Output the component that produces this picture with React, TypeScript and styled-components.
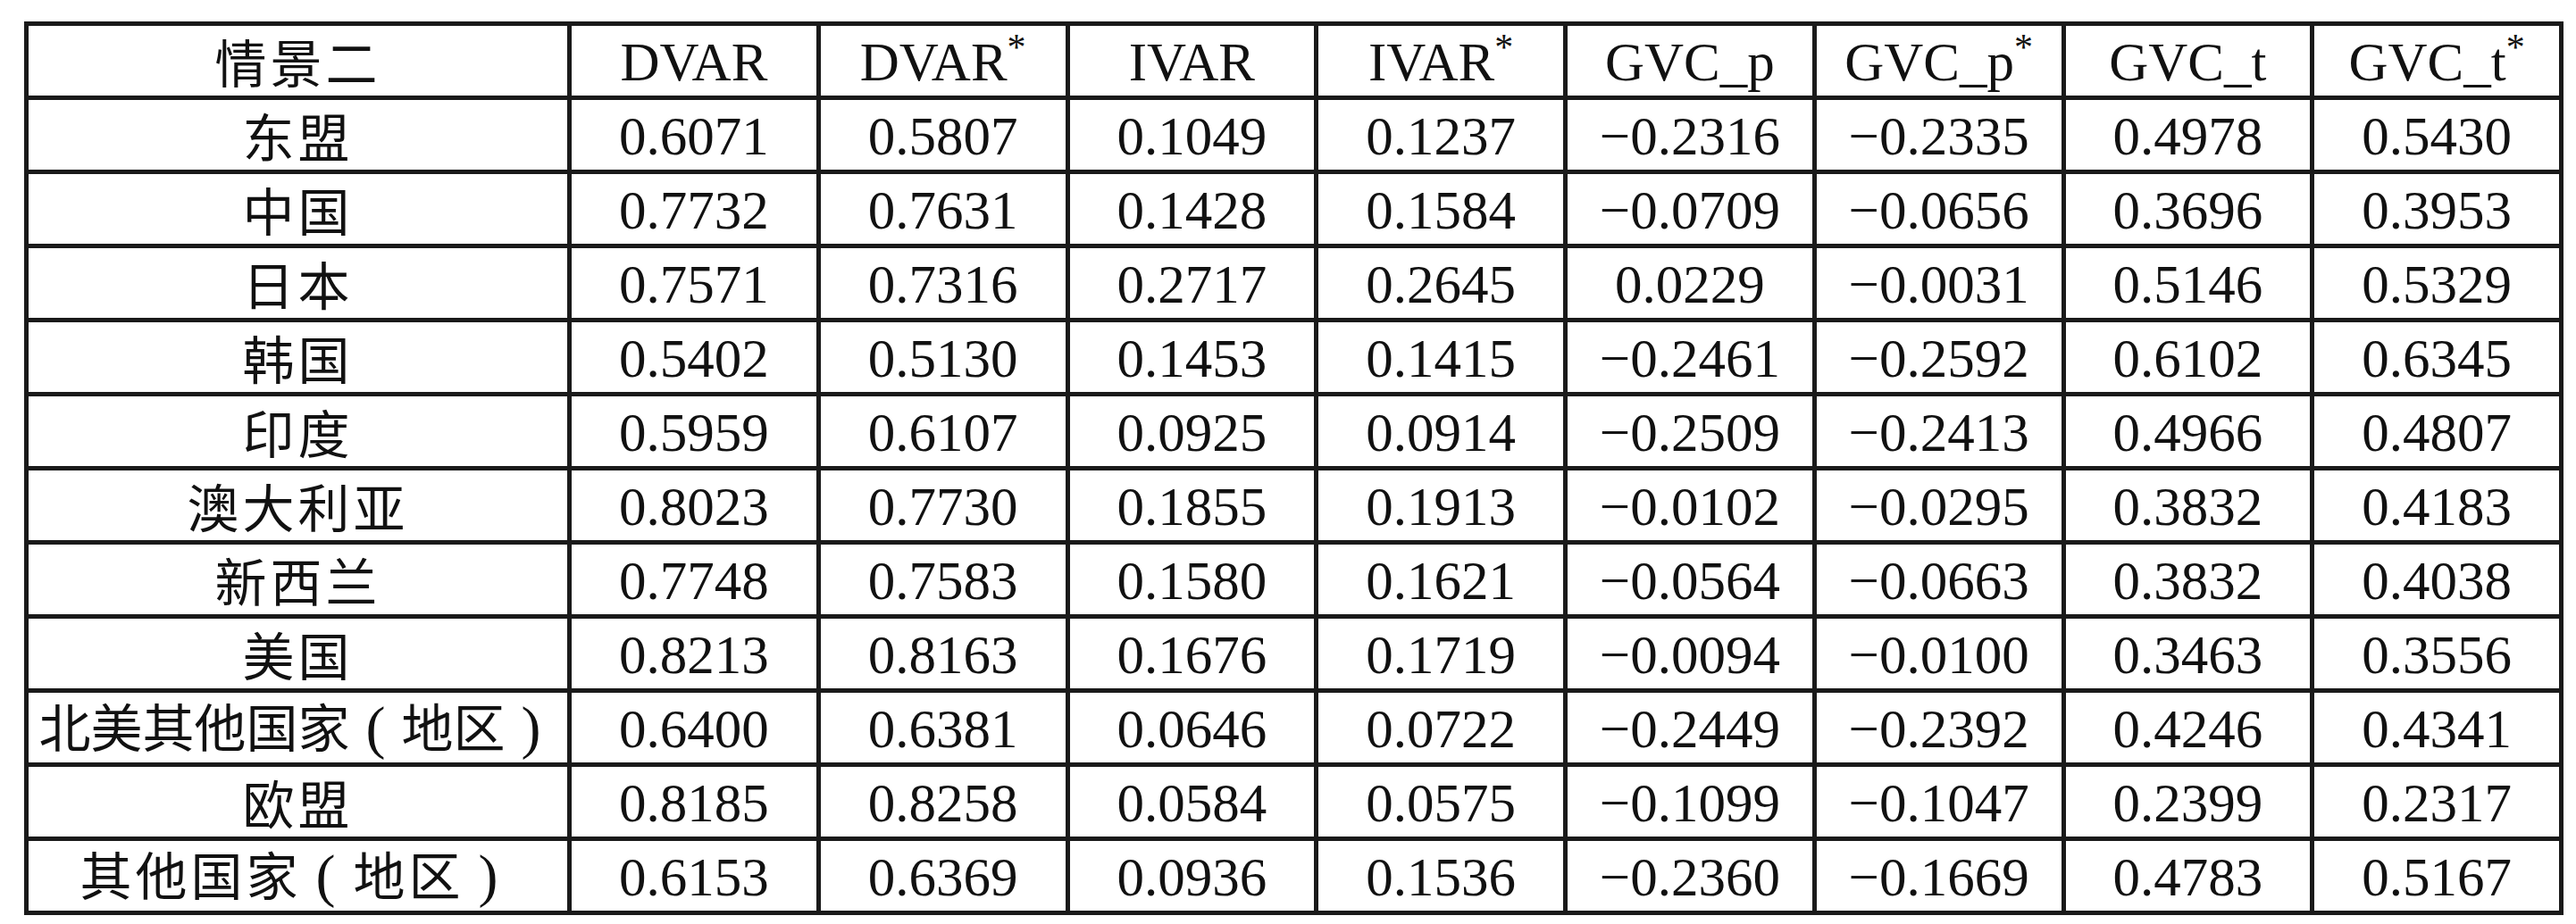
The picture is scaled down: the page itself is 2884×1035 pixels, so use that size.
import styled, { createGlobalStyle } from 'styled-components';

const GlobalStyle = createGlobalStyle`
  html, body {
    margin: 0;
    background: #fff;
  }
  body {
    font-family: "Liberation Serif", "Noto Sans CJK SC", serif;
    color: #111;
  }
`;

type Column = { label: string; star?: boolean };

const COLUMNS: Column[] = [
  { label: 'DVAR' },
  { label: 'DVAR', star: true },
  { label: 'IVAR' },
  { label: 'IVAR', star: true },
  { label: 'GVC_p' },
  { label: 'GVC_p', star: true },
  { label: 'GVC_t' },
  { label: 'GVC_t', star: true },
];

const ROWS: [string, string[]][] = [
  ['东盟', ['0.6071', '0.5807', '0.1049', '0.1237', '−0.2316', '−0.2335', '0.4978', '0.5430']],
  ['中国', ['0.7732', '0.7631', '0.1428', '0.1584', '−0.0709', '−0.0656', '0.3696', '0.3953']],
  ['日本', ['0.7571', '0.7316', '0.2717', '0.2645', '0.0229', '−0.0031', '0.5146', '0.5329']],
  ['韩国', ['0.5402', '0.5130', '0.1453', '0.1415', '−0.2461', '−0.2592', '0.6102', '0.6345']],
  ['印度', ['0.5959', '0.6107', '0.0925', '0.0914', '−0.2509', '−0.2413', '0.4966', '0.4807']],
  ['澳大利亚', ['0.8023', '0.7730', '0.1855', '0.1913', '−0.0102', '−0.0295', '0.3832', '0.4183']],
  ['新西兰', ['0.7748', '0.7583', '0.1580', '0.1621', '−0.0564', '−0.0663', '0.3832', '0.4038']],
  ['美国', ['0.8213', '0.8163', '0.1676', '0.1719', '−0.0094', '−0.0100', '0.3463', '0.3556']],
  ['北美其他国家（地区）', ['0.6400', '0.6381', '0.0646', '0.0722', '−0.2449', '−0.2392', '0.4246', '0.4341']],
  ['欧盟', ['0.8185', '0.8258', '0.0584', '0.0575', '−0.1099', '−0.1047', '0.2399', '0.2317']],
  ['其他国家（地区）', ['0.6153', '0.6369', '0.0936', '0.1536', '−0.2360', '−0.1669', '0.4783', '0.5167']],
];

// full-width brackets drawn as tall centred parens, like the source typeface
const Name = ({ text }: { text: string }) => (
  <>
    {text.split(/([（）])/).filter(Boolean).map((part, i) =>
      part === '（' ? <Paren key={i}>(</Paren>
        : part === '）' ? <Paren key={i}>)</Paren>
          : <span key={i}>{part}</span>
    )}
  </>
);

const App = (): JSX.Element => {
  return (
    <Page>
      <GlobalStyle />
      <Table>
        <colgroup>
          <NameCol />
          {COLUMNS.map((_, i) => <col key={i} />)}
        </colgroup>
        <thead>
          <Row>
            <Label as="th">情景二</Label>
            {COLUMNS.map((c, i) => (
              <Cell as="th" key={i}>
                {c.label}
                {c.star && <Star>*</Star>}
              </Cell>
            ))}
          </Row>
        </thead>
        <tbody>
          {ROWS.map(([name, values]) => (
            <Row key={name}>
              <Label $tight={name.length > 8}><Name text={name} /></Label>
              {values.map((v, i) => <Cell key={i}>{v}</Cell>)}
            </Row>
          ))}
        </tbody>
      </Table>
    </Page>
  );
};

export default App;

const Page = styled.div`
  padding: 24px 0 0 27px;
`
const Table = styled.table`
  width: 2843px;
  table-layout: fixed;
  border-collapse: collapse;
  border: 5px solid #1a1a1a;
`
const NameCol = styled.col`
  width: 608px;
`
const Row = styled.tr`
  height: 83px;
`
const Cell = styled.td`
  padding: 3px 0 0;
  border: 5px solid #1a1a1a;
  text-align: center;
  vertical-align: middle;
  font-size: 61px;
  font-weight: 400;
  line-height: 1;
  white-space: nowrap;
  color: #111;
`
const Label = styled(Cell)<{ $tight?: boolean }>`
  padding: 0;
  font-family: "Noto Sans CJK SC", sans-serif;
  font-size: 58px;
  letter-spacing: ${p => p.$tight ? '0' : '4px'};
`
const Paren = styled.span`
  display: inline-block;
  width: 58px;
  text-align: center;
  font-family: "Liberation Serif", serif;
  font-size: 66px;
  line-height: 1;
`
const Star = styled.span`
  font-size: 42px;
  line-height: 0;
  vertical-align: 23px;
`
